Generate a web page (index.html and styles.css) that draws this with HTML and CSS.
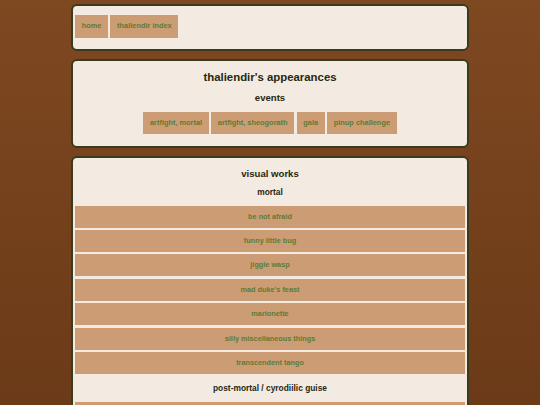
FILE: index.html
```
<!DOCTYPE html>
<html>
<head>
<meta charset="utf-8">
<link rel="stylesheet" href="styles.css">
</head>
<body>
<div class="box nav-box">
  <nav class="row left">
    <a class="btn" href="#">home</a>
    <a class="btn" href="#">thaliendir index</a>
  </nav>
</div>
<div class="box head-box">
  <h1 class="title">thaliendir's appearances</h1>
  <h2 class="sub">events</h2>
  <div class="row center">
    <a class="btn" href="#">artfight, mortal</a>
    <a class="btn" href="#">artfight, sheogorath</a>
    <a class="btn" href="#">gala</a>
    <a class="btn" href="#">pinup challenge</a>
  </div>
</div>
<div class="box works-box">
  <h2 class="sub first">visual works</h2>
  <h3 class="group top">mortal</h3>
  <a class="item" href="#">be not afraid</a>
  <a class="item" href="#">funny little bug</a>
  <a class="item" href="#">jiggle wasp</a>
  <a class="item" href="#">mad duke's feast</a>
  <a class="item" href="#">marionette</a>
  <a class="item" href="#">silly miscellaneous things</a>
  <a class="item" href="#">transcendent tango</a>
  <h3 class="group">post-mortal / cyrodiilic guise</h3>
  <a class="item" href="#"></a>
</div>
</body>
</html>
```
FILE: styles.css
```
html, body {
  margin: 0;
  padding: 0;
}
body {
  background: linear-gradient(to bottom, #7e4821, #6a3917);
  min-height: 405px;
  padding-top: 4px;
  font-family: "Liberation Sans", Arial, sans-serif;
  overflow: hidden;
}
.box {
  box-sizing: border-box;
  width: 398px;
  margin: 0 auto 8px;
  background: #f3ebe2;
  border: 2px solid #3a3a1c;
  border-radius: 6px;
  padding: 0 2px;
}
.nav-box {
  padding-top: 9px;
  padding-bottom: 11px;
}
.head-box {
  padding-top: 9px;
  padding-bottom: 12px;
}
.works-box {
  padding-top: 10px;
}
.row {
  display: flex;
  gap: 2.3px;
}
.row.center {
  justify-content: center;
}
.btn {
  display: block;
  background: #cc9d75;
  color: #5e7b34;
  font-weight: bold;
  font-size: 7.4px;
  height: 22.7px;
  line-height: 22.7px;
  padding: 0 6.7px;
  text-decoration: none;
}
.title {
  margin: 0;
  text-align: center;
  font-size: 11.4px;
  line-height: 14px;
  color: #272711;
}
.sub {
  margin: 8px 0 8px;
  text-align: center;
  font-size: 9.6px;
  line-height: 12px;
  color: #272711;
}
.sub.first {
  margin: 0 0 7px;
}
.group {
  margin: 9px 0;
  text-align: center;
  font-size: 8.4px;
  line-height: 10px;
  color: #272711;
}
.group.top {
  margin: 7px 0 8.2px;
}
.item {
  display: block;
  background: #cc9d75;
  color: #5e7b34;
  font-weight: bold;
  font-size: 7.3px;
  height: 22px;
  line-height: 22px;
  text-align: center;
  text-decoration: none;
  margin-bottom: 2.4px;
}
```
